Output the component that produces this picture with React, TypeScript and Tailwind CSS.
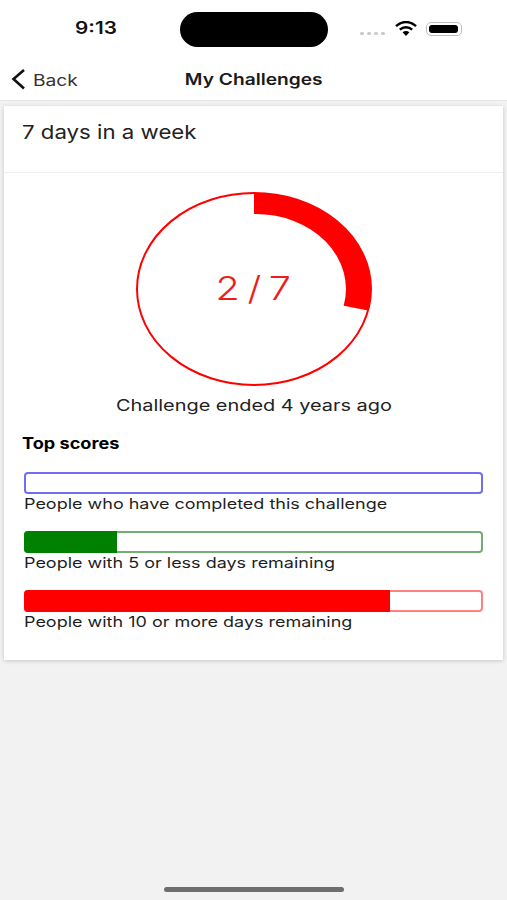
const font = { fontFamily: "Inter, 'Liberation Sans', sans-serif" };

function Bar({ frame, fill, width, label }: { frame: string; fill: string; width: string; label: string }) {
  return (
    <div className="flex flex-col">
      <div className={`h-[22px] rounded-[4px] overflow-hidden bg-white ${frame}`}>
        <div className={`h-full ${fill} ${width}`} />
      </div>
      <div className="h-[18px] flex items-center mt-[1px] text-[#1f1f1f] text-[14.5px]">
        <span className="inline-block whitespace-nowrap origin-left scale-x-[1.24]">{label}</span>
      </div>
    </div>
  );
}

export default function App() {
  return (
    <div style={font} className="min-h-[900px] w-[507px] bg-[#f2f2f2] flex flex-col relative overflow-hidden">
      <header className="h-[101px] bg-white border-b border-[#e6e6e6] shrink-0 flex flex-col">
        <div className="h-[59px] flex items-start relative">
          <span className="absolute left-[75px] top-[18px] text-[17px] leading-[20px] font-semibold text-[#111] origin-left scale-x-[1.22] inline-block">9:13</span>
          <div className="absolute left-[180px] top-[12px] w-[148px] h-[35px] rounded-full bg-black" />
          <div className="absolute left-[360px] top-[32px] flex gap-[3px]">
            <i className="w-[4px] h-[3px] rounded-full bg-[#c8c8c8]" />
            <i className="w-[4px] h-[3px] rounded-full bg-[#c8c8c8]" />
            <i className="w-[4px] h-[3px] rounded-full bg-[#c8c8c8]" />
            <i className="w-[4px] h-[3px] rounded-full bg-[#c8c8c8]" />
          </div>
          <svg className="absolute left-[395px] top-[21px]" width="22" height="15" viewBox="0 0 22 15">
            <path d="M1 5.2C6.8-.4 15.2-.4 21 5.2" fill="none" stroke="#000" strokeWidth="2.4" />
            <path d="M4.8 8.6c3.6-3.2 8.8-3.2 12.4 0" fill="none" stroke="#000" strokeWidth="2.4" />
            <path d="M7.6 11.2c2-1.5 4.8-1.5 6.8 0L11 15z" fill="#000" />
          </svg>
          <div className="absolute left-[426px] top-[22px] w-[36px] h-[14px] rounded-[5px] border border-[#bdbdbd] p-[2px] pr-[3px]">
            <div className="w-full h-full rounded-[3px] bg-black" />
          </div>
        </div>
        <div className="h-[41px] relative flex items-center justify-center">
          <svg className="absolute left-[10px] top-[8px]" width="16" height="24" viewBox="0 0 16 24">
            <path d="M14 3 3.5 12 14 21.5" fill="none" stroke="#111" strokeWidth="2.6" />
          </svg>
          <span className="absolute left-[33px] top-[10px] text-[16px] leading-[22px] text-[#333] origin-left scale-x-[1.2] inline-block">Back</span>
          <span className="text-[15.5px] font-semibold text-[#1a1a1a] scale-x-[1.236] inline-block">My Challenges</span>
        </div>
      </header>

      <main className="mx-1 mt-[5px] h-[554px] bg-white shadow-[0_1px_4px_rgba(0,0,0,0.18)] flex flex-col">
        <div className="h-[67px] border-b border-[#f0f0f0] pl-[18px] pt-[14px] shrink-0">
          <span className="inline-block text-[19px] leading-[26px] text-[#222] origin-left scale-x-[1.17]">7 days in a week</span>
        </div>
        <div className="flex flex-col">
          <div className="h-[192px] w-[236px] mx-auto mt-[19px] relative flex items-center justify-center">
            <svg className="absolute inset-0" width="236" height="194" viewBox="0 0 236 194">
              <ellipse cx="118" cy="97" rx="117" ry="96" fill="none" stroke="#f00" strokeWidth="2" />
              <path d="M118 1A117 96 0 0 1 232 118.4L207.7 113.7A90 75 0 0 0 118 22Z" fill="#f00" />
            </svg>
            <span className="relative text-[#ee1c1c] text-[33px] leading-[44px] font-light tracking-[1px] [word-spacing:-5px] scale-x-[1.2] inline-block whitespace-nowrap">2 / 7</span>
          </div>
          <div className="h-[22px] mt-[10px] flex items-center justify-center text-[#222] text-[16px]">
            <span className="inline-block whitespace-nowrap scale-x-[1.244]">Challenge ended 4 years ago</span>
          </div>
          <div className="h-[20px] mt-[18px] ml-[18px] flex items-center text-[15.5px] font-bold text-black">
            <span className="inline-block origin-left scale-x-[1.17]">Top scores</span>
          </div>
          <div className="mx-5 mt-[18px] flex flex-col gap-[18px]">
            <Bar frame="shadow-[inset_0_0_0_2px_#6f6ff0]" fill="bg-transparent" width="w-0" label="People who have completed this challenge" />
            <Bar frame="shadow-[inset_0_0_0_2px_#74ad74]" fill="bg-[#008000]" width="w-[20.2%]" label="People with 5 or less days remaining" />
            <Bar frame="shadow-[inset_0_0_0_2px_#ff8080]" fill="bg-[#ff0000]" width="w-[79.8%]" label="People with 10 or more days remaining" />
          </div>
        </div>
      </main>

      <div className="absolute left-[164px] top-[887px] w-[180px] h-[5px] rounded-full bg-[#6e6e6e]" />
    </div>
  );
}
